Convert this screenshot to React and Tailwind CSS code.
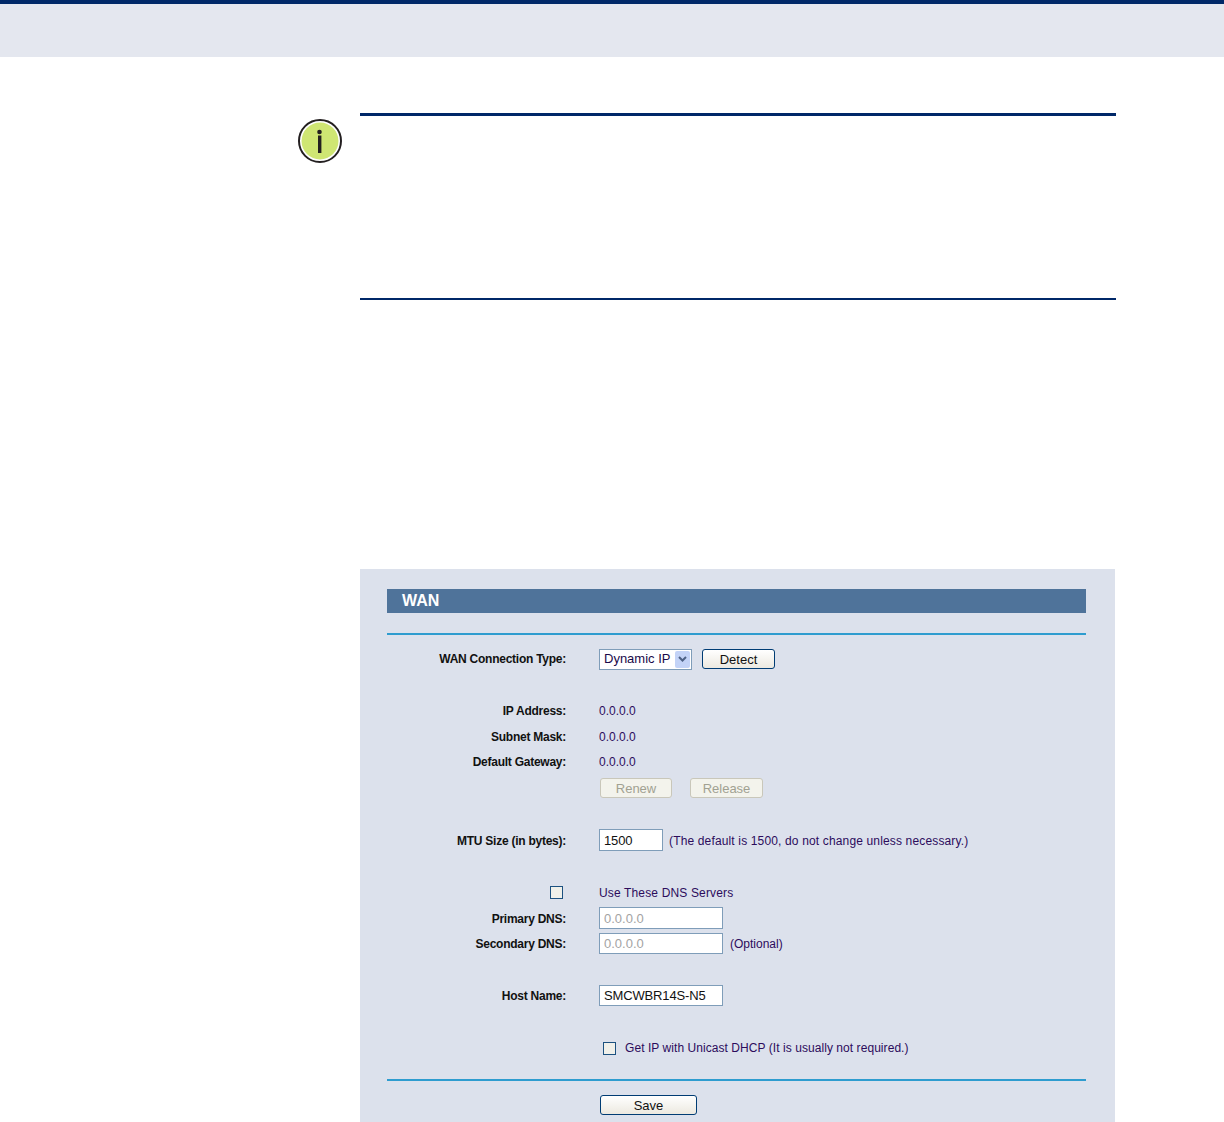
import React from 'react';

const Row = ({ label, className = '', children, labelClass = '' }) => (
  <div className={`flex items-center ${className}`}>
    <div className={`w-[179px] shrink-0 text-right font-bold tracking-[-0.25px] text-[#111] ${labelClass}`}>{label}</div>
    <div className="ml-[33px] flex items-center">{children}</div>
  </div>
);

const Value = ({ children, className = '' }) => (
  <span className={`text-[#2c0c5c] ${className}`}>{children}</span>
);

const TextBox = ({ value, className = '', muted = false }) => (
  <input
    readOnly
    value={value}
    className={`h-full border border-[#7f9db9] bg-white px-1 text-[13px] tracking-[-0.15px] outline-none ${muted ? 'text-[#a3a3a3] tracking-normal' : 'text-[#111]'} ${className}`}
  />
);

const Btn = ({ children, className = '' }) => (
  <button className={`h-[20px] rounded-[3px] border border-[#003c74] bg-gradient-to-b from-white to-[#ece9e0] text-[13px] text-[#111] ${className}`}>
    {children}
  </button>
);

const OffBtn = ({ children, className = '' }) => (
  <button disabled className={`h-[20px] rounded-[3px] border border-[#c9c7ba] bg-[#f3f3ec] text-[13px] text-[#a1a192] ${className}`}>
    {children}
  </button>
);

const Check = ({ className = '' }) => (
  <input type="checkbox" readOnly className={`h-[13px] w-[13px] appearance-none border border-[#1c5180] bg-[#f0f0ea] ${className}`} />
);

const InfoIcon = () => (
  <svg width="44" height="44" viewBox="0 0 44 44">
    <circle cx="22" cy="22" r="21" fill="#fff" stroke="#231f20" strokeWidth="2" />
    <circle cx="22" cy="22" r="18.5" fill="#cfe673" />
    <circle cx="21.5" cy="13" r="2.3" fill="#231f20" />
    <rect x="20" y="16.5" width="3.4" height="17.5" fill="#231f20" />
  </svg>
);

export default function App() {
  return (
    <div className="h-[1122px] overflow-hidden bg-white text-[12px] font-['Liberation_Sans',Arial,sans-serif]">
      <header className="h-[57px] border-t-4 border-[#002868] bg-[#e4e7ef]" />

      <section className="ml-[298px] mt-[56px] flex">
        <div className="mt-[6px] h-[44px] w-[44px]">
          <InfoIcon />
        </div>
        <div className="ml-[18px] h-[187px] w-[756px] border-t-[3px] border-b-2 border-[#002868]" />
      </section>

      <section className="ml-[360px] mt-[269px] h-[553px] w-[755px] bg-[#dce1ec] pl-[27px] pr-[29px] pt-[20px]">
        <div className="flex h-[24px] items-center bg-[#4f739a] pl-[15px] text-[16px] font-bold text-white">WAN</div>
        <div className="mt-[20px] h-[2px] bg-[#2e9ccf]" />

        <Row label="WAN Connection Type:" className="mt-[14px] h-[20px]">
          <div className="flex h-[21px] w-[93px] items-center justify-between border border-[#7f9db9] bg-white pl-1 pr-px text-[13px] text-[#1a0a4a]">
            <span>Dynamic IP</span>
            <span className="flex h-[17px] w-[15px] items-center justify-center rounded-[2px] bg-[#c3d3f7]">
              <svg width="9" height="6" viewBox="0 0 9 6">
                <path d="M1 1l3.5 3.5L8 1" fill="none" stroke="#4d6185" strokeWidth="2" />
              </svg>
            </span>
          </div>
          <Btn className="ml-[10px] w-[73px]">Detect</Btn>
        </Row>

        <Row label="IP Address:" className="mt-[29px] h-[26px]"><Value>0.0.0.0</Value></Row>
        <Row label="Subnet Mask:" className="h-[26px]"><Value>0.0.0.0</Value></Row>
        <Row label="Default Gateway:" className="h-[24px]"><Value>0.0.0.0</Value></Row>
        <Row label="" className="mt-[4px] h-[20px]">
          <OffBtn className="ml-px w-[72px]">Renew</OffBtn>
          <OffBtn className="ml-[18px] w-[73px]">Release</OffBtn>
        </Row>

        <Row label="MTU Size (in bytes):" labelClass="pt-[2px]" className="mt-[31px] h-[22px]">
          <div className="h-[22px]"><TextBox value="1500" className="w-[64px]" /></div>
          <Value className="ml-[6px] pt-[2px] tracking-[0.15px]">(The default is 1500, do not change unless necessary.)</Value>
        </Row>

        <div className="mt-[32px] flex h-[20px] items-center">
          <div className="flex w-[176px] justify-end pb-[2px]"><Check /></div>
          <Value className="ml-[36px] tracking-[0.15px]">Use These DNS Servers</Value>
        </div>
        <Row label="Primary DNS:" labelClass="pt-[2px]" className="mt-[4px] h-[22px]">
          <div className="h-[22px]"><TextBox value="0.0.0.0" muted className="w-[124px]" /></div>
        </Row>
        <Row label="Secondary DNS:" className="mt-[4px] h-[21px]">
          <div className="h-[21px]"><TextBox value="0.0.0.0" muted className="w-[124px]" /></div>
          <Value className="ml-[7px]">(Optional)</Value>
        </Row>

        <Row label="Host Name:" className="mt-[31px] h-[21px]">
          <div className="h-[21px]"><TextBox value="SMCWBR14S-N5" className="w-[124px]" /></div>
        </Row>

        <Row label="" className="mt-[32px] h-[20px]">
          <Check className="ml-[4px]" />
          <Value className="ml-[9px] tracking-[0.06px]">Get IP with Unicast DHCP (It is usually not required.)</Value>
        </Row>

        <div className="mt-[21px] h-[2px] bg-[#2e9ccf]" />

        <Row label="" className="mt-[14px] h-[20px]">
          <Btn className="ml-px w-[97px]">Save</Btn>
        </Row>
      </section>
    </div>
  );
}
